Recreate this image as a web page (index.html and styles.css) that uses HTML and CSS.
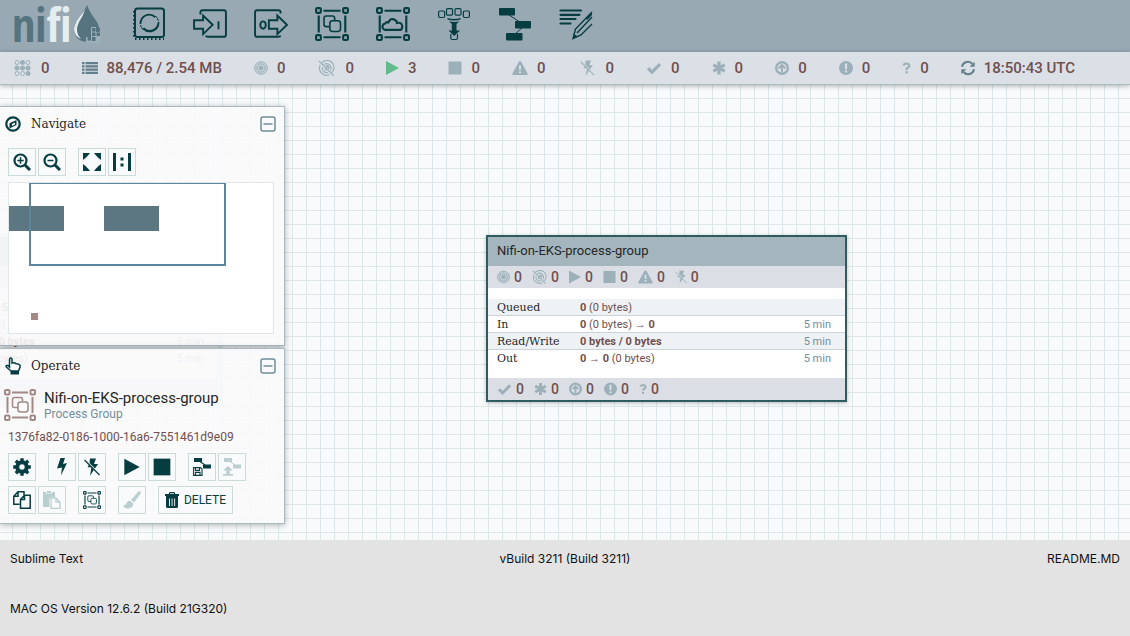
FILE: index.html
```html
<!DOCTYPE html>
<html lang="en">
<head>
<meta charset="utf-8">
<title>NiFi Flow</title>
<link rel="stylesheet" href="styles.css">
</head>
<body>
<svg class="sprite" aria-hidden="true">
  <symbol id="i-threads" viewBox="0 0 16 16"><g fill="none" stroke="currentColor"><circle cx="2.500" cy="2.500" r="2"/><circle cx="13.500" cy="2.500" r="2"/><circle cx="2.500" cy="13.500" r="2"/></g><g fill="currentColor"><circle cx="8" cy="2.500" r="2.500"/><circle cx="2.500" cy="8" r="2.500"/><circle cx="8" cy="8" r="2.500"/><circle cx="13.500" cy="8" r="2.500"/><circle cx="13.500" cy="13.500" r="2.500"/></g><circle cx="8" cy="13.500" r="2" fill="none" stroke="currentColor"/></symbol>
  <symbol id="i-list" viewBox="0 0 16 12"><path fill="currentColor" d="M0 0h2.500v2.300H0zM3.500 0H16v2.300H3.500zM0 3.200h2.500v2.300H0zM3.500 3.200H16v2.300H3.500zM0 6.500h2.500v2.300H0zM3.500 6.500H16v2.300H3.500zM0 9.700h2.500V12H0zM3.500 9.700H16V12H3.500z"/></symbol>
  <symbol id="i-transmit" viewBox="0 0 14 14"><circle cx="7" cy="7" r="6.500" fill="currentColor" opacity=".3"/><g fill="none" stroke="currentColor"><circle cx="7" cy="7" r="6.300"/><circle cx="7" cy="7" r="4.200"/></g><circle cx="7" cy="7" r="2.300" fill="currentColor"/></symbol>
  <symbol id="i-notransmit" viewBox="0 0 16 16"><g fill="none" stroke="currentColor" stroke-width="1.200"><path d="M3.500 2.500A7 7 0 0 1 13.500 12.500M5.500 4.400A4.600 4.600 0 0 1 12 10.500M1.800 5A7 7 0 0 0 11 14.500M4 7a4.500 4.500 0 0 0 5.500 5.500M.5 1L15 15.500"/></g><path fill="currentColor" d="M7 6a2.400 2.400 0 0 1 3.500 3.300zM6 7.500l3 3a2.400 2.400 0 0 1-3-3z"/></symbol>
  <symbol id="i-play" viewBox="0 0 12 14"><path fill="currentColor" d="M0 .5L12 7 0 13.500z"/></symbol>
  <symbol id="i-stop" viewBox="0 0 14 14"><path fill="currentColor" d="M.5.500h13v13H.5z"/></symbol>
  <symbol id="i-warn" viewBox="0 0 16 14"><path fill="currentColor" fill-rule="evenodd" d="M8 0q.8 0 1.200.7l6.500 12q.4 1.300-1 1.300H1.300q-1.400 0-1-1.300l6.500-12Q7.200 0 8 0zM6.900 4.500l.3 4.500h1.600l.3-4.500zM7 10.200v1.900h2v-1.900z"/></symbol>
  <symbol id="i-disabled" viewBox="0 0 16 18"><path fill="currentColor" d="M6 .5h6L10 6h4L11 10.500 5.500 5zM7.500 9l2.500 2.500L6 18zM5 6.800L7.500 9.300H3.500z"/><path stroke="currentColor" stroke-width="1.300" d="M.5 2l15 15"/></symbol>
  <symbol id="i-check" viewBox="0 0 16 14"><path d="M2 7.200l4 4L14 3" fill="none" stroke="currentColor" stroke-width="3.200"/></symbol>
  <symbol id="i-asterisk" viewBox="0 0 14 14"><path d="M7 .5v13M1.300 3.800l11.400 6.400M12.700 3.800L1.300 10.200" stroke="currentColor" stroke-width="3.200"/></symbol>
  <symbol id="i-up" viewBox="0 0 14 14"><circle cx="7" cy="7" r="5.800" fill="none" stroke="currentColor" stroke-width="2.400"/><path d="M7 11.500V4M3.800 7.200L7 4l3.200 3.200" fill="none" stroke="currentColor" stroke-width="2"/></symbol>
  <symbol id="i-bang" viewBox="0 0 14 14"><path fill="currentColor" fill-rule="evenodd" d="M7 0a7 7 0 1 1 0 14A7 7 0 0 1 7 0zM5.800 2.500l.3 6h1.800l.3-6zM5.900 9.600v2h2.200v-2z"/></symbol>
  <symbol id="i-question" viewBox="0 0 9 14"><path d="M1.500 4.500Q2 2.500 4.500 2.500 7.500 2.700 7.300 5 7 6.300 5.500 7 4.500 7.600 4.500 9" fill="none" stroke="currentColor" stroke-width="2.200"/><path fill="currentColor" d="M3.400 10.200h2.300v2.300H3.400z"/></symbol>
  <symbol id="i-refresh" viewBox="0 0 14 14"><path d="M1 5.800A6 6 0 0 1 11.500 3M13 8.200A6 6 0 0 1 2.500 11" fill="none" stroke="currentColor" stroke-width="2"/><path fill="currentColor" d="M13.700.8v5h-5zM.3 13.200v-5h5z"/></symbol>
  <symbol id="i-processor" viewBox="0 0 32 34"><rect x="2" y="1.500" width="29" height="28.500" rx="2.500" fill="none" stroke="currentColor" stroke-width="2"/><path d="M1 4v27M2 32h29" fill="none" stroke="currentColor" stroke-width="2" stroke-dasharray="1.500 2.500"/><path fill="currentColor" d="M6.600 17A9.700 9.700 0 0 1 23 9.500l-1.500 1.200Q18 7.500 13.500 9 8.500 11 8.300 17zM26.400 15A9.700 9.700 0 0 1 9.500 22l1.600-1.500q3.900 4 8.900 1.800Q24.500 20 24.800 15z"/><path d="M7.500 18a9 9 0 0 0 3 5M25.500 14a9 9 0 0 0-3-5" fill="none" stroke="currentColor"/></symbol>
  <symbol id="i-input" viewBox="0 0 32 32"><g fill="none" stroke="currentColor" stroke-width="1.800"><path d="M7 7V5q0-2 2-2h20q2 0 2 2v21q0 2-2 2H14q-1.500 0-2-1"/><path d="M1 12.500h8.500V8l9 8.800-9 8.700v-5H1zM24 13.500v7.500"/></g></symbol>
  <symbol id="i-output" viewBox="0 0 32 32"><g fill="none" stroke="currentColor" stroke-width="1.800"><path d="M25 6V5q0-2-2-2H3Q1 3 1 5v21q0 2 2 2h20q1.500 0 2-1"/><path d="M14 12.500h8V8l9 8.800-9 8.700v-5h-8z"/><ellipse cx="8.500" cy="17" rx="2.600" ry="3.500"/></g></symbol>
  <symbol id="i-group" viewBox="0 0 32 32"><g fill="none" stroke="currentColor" stroke-width="2"><rect x="1" y="1" width="4.500" height="4.500" rx="1"/><rect x="26.500" y="1" width="4.500" height="4.500" rx="1"/><rect x="1" y="26.500" width="4.500" height="4.500" rx="1"/><rect x="26.500" y="26.500" width="4.500" height="4.500" rx="1"/><path d="M8 3.500h16M8 28.500h16M3.500 8v16M28.500 8v16"/></g><g fill="none" stroke="currentColor" stroke-width="1.500"><path d="M14 18.500h-3.500q-2 0-2-2v-6q0-2 2-2h6q2 0 2 2v2"/><rect x="14" y="13" width="10" height="10" rx="2.500"/></g></symbol>
  <symbol id="i-remote" viewBox="0 0 32 32"><g fill="none" stroke="currentColor" stroke-width="2"><rect x="1" y="1" width="4.500" height="4.500" rx="1"/><rect x="26.500" y="1" width="4.500" height="4.500" rx="1"/><rect x="1" y="26.500" width="4.500" height="4.500" rx="1"/><rect x="26.500" y="26.500" width="4.500" height="4.500" rx="1"/><path d="M8 3.500h16M8 28.500h16M3.500 8v16M28.500 8v16M9.500 21.500a3 3 0 0 1-.8-6q1-1.800 3-1 2-4.500 6-2.500 2 1 2 3 4.300-1 5 3 0 3.500-2 3.500z"/></g></symbol>
  <symbol id="i-funnel" viewBox="0 0 32 34"><g fill="none" stroke="currentColor" stroke-width="1.200"><rect x=".6" y="4" width="6" height="6.500" rx="1.200"/><rect x="8.500" y="1.600" width="6" height="6.500" rx="1.200"/><rect x="17" y="1.600" width="6" height="6.500" rx="1.200"/><rect x="25.400" y="4" width="6" height="6.500" rx="1.200"/><path d="M12.800 27v4q0 1.500 1.500 1.500H18q1.500 0 1.500-1.500v-4"/></g><path fill="currentColor" d="M9.500 11q6.500 2 13 0v1.500q-6.500 2-13 0zM11 14.200q5.500 1.500 10.500 0L18.500 17v6.500H22L16.200 29l-5.700-5.500h3.300V17z"/></symbol>
  <symbol id="i-template" viewBox="0 0 32 34"><g fill="currentColor"><rect x="0" y="1" width="16" height="7.500" rx="1"/><rect x="16" y="14" width="16" height="7.500" rx="1"/><rect x="7" y="26" width="16.500" height="7.500" rx="1"/></g><path d="M10 8l10 6.500M23 21l-7 6" stroke="currentColor" fill="none"/></symbol>
  <symbol id="i-label" viewBox="0 0 34 34"><g fill="none" stroke="currentColor" stroke-width="2.200" stroke-linecap="round"><path d="M1.500 3.500H22M1.500 7.800h19M1.500 12h15M1.500 16.500h10"/></g><g fill="none" stroke="currentColor" stroke-width="1.400"><path d="M33 5L16.500 22 14 31.500 22 28 33 17M33 10L18 26"/></g><path fill="currentColor" d="M14.800 27l4 2.500-5 2.500zM27 11l6-5v2l-5 5z"/></symbol>
  <symbol id="i-compass" viewBox="0 0 16 16"><circle cx="8" cy="8" r="6.700" fill="none" stroke="currentColor" stroke-width="2.200"/><path fill="currentColor" fill-rule="evenodd" d="M11.500 4v5l-7 3.500V7.200zM7 8v2l3-1.500V6.500z"/></symbol>
  <symbol id="i-hand" viewBox="0 0 16 18"><path d="M4.500 10V2.500q0-1.500 1.300-1.500T7 2.500V6q3-.5 4 .8 3-.3 4 1.500v2L13.500 14H6.200L3 11.500 1 9.500q0-1.500 1.800-1z" fill="none" stroke="currentColor" stroke-width="1.500"/><path fill="currentColor" d="M5.500 14H14v3.500H5.500z"/></symbol>
  <symbol id="i-zoomin" viewBox="0 0 18 18"><circle cx="7.500" cy="7.500" r="6" fill="none" stroke="currentColor" stroke-width="2.200"/><path d="M12 12l5 5" stroke="currentColor" stroke-width="3"/><path d="M4.300 7.500h6.400M7.500 4.300v6.400" stroke="currentColor" stroke-width="1.500"/></symbol>
  <symbol id="i-zoomout" viewBox="0 0 18 18"><circle cx="7.500" cy="7.500" r="6" fill="none" stroke="currentColor" stroke-width="2.200"/><path d="M12 12l5 5" stroke="currentColor" stroke-width="3"/><path d="M4.500 7.500h6" stroke="currentColor" stroke-width="1.500"/></symbol>
  <symbol id="i-fit" viewBox="0 0 18 18"><path fill="currentColor" d="M0 0h7L5 2.500 2.500 5 0 7zM18 0v7l-2.500-2L13 2.500 11 0zM0 18v-7l2.500 2L5 15.500 7 18zM18 18h-7l2-2.500 2.500-2.500 2.500-2z"/></symbol>
  <symbol id="i-actual" viewBox="0 0 18 18"><path fill="currentColor" d="M0 0h3v18H0zM15 0h3v18h-3zM7.500 4.500h3v3h-3zM7.500 10.500h3v3h-3z"/></symbol>
  <symbol id="i-minus" viewBox="0 0 16 16"><rect x="1" y="1" width="14" height="14" rx="2" fill="none" stroke="currentColor" stroke-width="1.500"/><path d="M3.500 8h9" stroke="currentColor" stroke-width="1.500"/></symbol>
  <symbol id="i-gear" viewBox="0 0 16 16"><circle cx="8" cy="8" r="4.200" fill="none" stroke="currentColor" stroke-width="3.600"/><g stroke="currentColor" stroke-width="3"><path d="M8 .2v3M8 12.800v3M.2 8h3M12.800 8h3M2.500 2.500l2 2M11.500 11.500l2 2M13.500 2.500l-2 2M4.500 11.500l-2 2"/></g></symbol>
  <symbol id="i-bolt" viewBox="0 0 12 18"><path fill="currentColor" d="M4.500 0H9L7 6l4-1L5 17.500 6 9.500l-5 1z"/></symbol>
  <symbol id="i-save" viewBox="0 0 18 18"><path fill="currentColor" d="M1 0h8v4H1zM10 6.500h8v4h-8z"/><path d="M7 3.500L12 7M.6 9.600h6.800L9 11v6.400H.6zM2.500 9.600v2.800h4V9.600M2.500 17.400v-3h4.500v3" fill="none" stroke="currentColor" stroke-width="1.100"/></symbol>
  <symbol id="i-upload" viewBox="0 0 18 18"><path fill="currentColor" d="M1 0h8v4H1zM10 6.500h8v4h-8zM5 8l5 4.500H6.700V16H10v1.700H0V16h3.300v-3.500H0z"/><path d="M7 3.500L12 7" stroke="currentColor"/></symbol>
  <symbol id="i-copy" viewBox="0 0 18 18"><path d="M6.500 13.200H.8V5.200L5 .8h6V4M5 .8v4.400H.8M7.500 8.500L11.500 4.200h5.700v13H7.500zM11.500 4.200v4.300h-4" fill="none" stroke="currentColor" stroke-width="1.500"/></symbol>
  <symbol id="i-paste" viewBox="0 0 18 18"><path fill="currentColor" d="M0 1h3v1.500h6V1h3v5H8L6.500 8v8H0zM4 0h4v2H4z"/><path d="M8 7h5l4 4v6.300H8zM13 7v4h4" fill="none" stroke="currentColor" stroke-width="1.300"/></symbol>
  <symbol id="i-brush" viewBox="0 0 18 18"><path fill="currentColor" d="M17.500.5q1 1-.5 3l-6 8-3-2.500 7-8q1.500-1.300 2.500-.5zM7 9.800l3.300 2.700Q10 17 5 17.500q-4 .3-5-3.500 2 .7 3-1 1-3 4-3.200z"/></symbol>
  <symbol id="i-trash" viewBox="0 0 14 16"><path fill="currentColor" fill-rule="evenodd" d="M4.500 0h5l.8 2H14v2H0V2h3.700zM5.200 1.200L5 2h4l-.2-.8zM1 4h12v10.500q0 1.500-1.500 1.500h-9Q1 16 1 14.500zM4 6.500v7.500h.9V6.500zM6.600 6.500v7.500h.9V6.500zM9.200 6.500v7.500h.9V6.500z"/></symbol>
</svg>

<header class="toolbar">
  <div class="logo"><span class="logo-ni">ni</span><span class="logo-fi">fi</span>
    <svg class="drop" viewBox="0 0 28 38"><path fill="#557480" d="M14 0Q16 6 22 14q5 7 4 12-2 11-12 11Q2 36 1 25 1 18 8 10 12 5 14 0z"/><path fill="#e4edf0" d="M12 5Q10 11 6 17q-5 10 2 17-7-3-7-10 1-7 7-14z"/><path fill="#9cb0b9" d="M18 22h5v5h5v11H13v-6h5z"/><path fill="#557480" d="M19 23h3.500v3.500H19zM23.500 23H27v3.500h-3.500zM14.500 27.500H18V31h-3.500zM19 27.500h3.500V31H19zM23.500 27.500H27V31h-3.500zM14.500 32H18v3.500h-3.500zM19 32h3.500v4H19z"/></svg>
  </div>
  <nav class="components" aria-label="Components">
    <button aria-label="Processor"><svg><use href="#i-processor"/></svg></button>
    <button aria-label="Input port"><svg><use href="#i-input"/></svg></button>
    <button aria-label="Output port"><svg><use href="#i-output"/></svg></button>
    <button aria-label="Process group"><svg><use href="#i-group"/></svg></button>
    <button aria-label="Remote process group"><svg><use href="#i-remote"/></svg></button>
    <button aria-label="Funnel"><svg><use href="#i-funnel"/></svg></button>
    <button aria-label="Template"><svg><use href="#i-template"/></svg></button>
    <button aria-label="Label"><svg><use href="#i-label"/></svg></button>
  </nav>
</header>

<div class="status">
  <span class="stat"><svg class="w19"><use href="#i-threads"/></svg>0</span>
  <span class="stat"><svg class="w16 dark"><use href="#i-list"/></svg>88,476 / 2.54 MB</span>
  <span class="stat"><svg class="w14"><use href="#i-transmit"/></svg>0</span>
  <span class="stat"><svg class="w19"><use href="#i-notransmit"/></svg>0</span>
  <span class="stat"><svg class="w13 running"><use href="#i-play"/></svg>3</span>
  <span class="stat"><svg class="w14"><use href="#i-stop"/></svg>0</span>
  <span class="stat"><svg class="w16"><use href="#i-warn"/></svg>0</span>
  <span class="stat"><svg class="w19"><use href="#i-disabled"/></svg>0</span>
  <span class="stat"><svg class="w16"><use href="#i-check"/></svg>0</span>
  <span class="stat"><svg class="w14"><use href="#i-asterisk"/></svg>0</span>
  <span class="stat"><svg class="w14"><use href="#i-up"/></svg>0</span>
  <span class="stat"><svg class="w14"><use href="#i-bang"/></svg>0</span>
  <span class="stat"><svg class="w9"><use href="#i-question"/></svg>0</span>
  <span class="stat"><svg class="w14 dark"><use href="#i-refresh"/></svg>18:50:43 UTC</span>
</div>

<main class="canvas">
  <section class="node node-behind" aria-hidden="true">
    <h2 class="node-title"></h2>
    <div class="node-stats"></div>
    <div class="node-body">
      <div class="row"><span></span><span>88,476 (1.5</span><span></span></div>
      <div class="row"><span></span><span><b>0</b> (0 bytes)</span><span></span></div>
      <div class="row"><span></span><span><b>0 bytes / 0 bytes</b></span><span class="when">5 min</span></div>
      <div class="row"><span></span><span><b>0</b> → <b>0</b> (0 bytes)</span><span class="when">5 min</span></div>
    </div>
    <div class="node-stats"></div>
  </section>

  <section class="node node-main">
    <h2 class="node-title">Nifi-on-EKS-process-group</h2>
    <div class="node-stats">
      <span><svg class="w13"><use href="#i-transmit"/></svg>0</span>
      <span><svg><use href="#i-notransmit"/></svg>0</span>
      <span><svg class="w12"><use href="#i-play"/></svg>0</span>
      <span><svg class="w13"><use href="#i-stop"/></svg>0</span>
      <span><svg><use href="#i-warn"/></svg>0</span>
      <span><svg class="w12"><use href="#i-disabled"/></svg>0</span>
    </div>
    <div class="node-body">
      <div class="row"><span class="name">Queued</span><span><b>0</b> (0 bytes)</span><span></span></div>
      <div class="row"><span class="name">In</span><span><b>0</b> (0 bytes) → <b>0</b></span><span class="when">5 min</span></div>
      <div class="row"><span class="name">Read/Write</span><span><b>0 bytes / 0 bytes</b></span><span class="when">5 min</span></div>
      <div class="row"><span class="name">Out</span><span><b>0</b> → <b>0</b> (0 bytes)</span><span class="when">5 min</span></div>
    </div>
    <div class="node-stats">
      <span><svg><use href="#i-check"/></svg>0</span>
      <span><svg class="w13"><use href="#i-asterisk"/></svg>0</span>
      <span><svg class="w13"><use href="#i-up"/></svg>0</span>
      <span><svg class="w13"><use href="#i-bang"/></svg>0</span>
      <span><svg class="w9"><use href="#i-question"/></svg>0</span>
    </div>
  </section>

  <aside class="palettes">
    <section class="palette">
      <div class="palette-head"><svg><use href="#i-compass"/></svg><h2>Navigate</h2><button aria-label="Collapse Navigate"><svg><use href="#i-minus"/></svg></button></div>
      <div class="tools">
        <div class="set"><button aria-label="Zoom in"><svg><use href="#i-zoomin"/></svg></button><button aria-label="Zoom out"><svg><use href="#i-zoomout"/></svg></button></div>
        <div class="set"><button aria-label="Fit"><svg><use href="#i-fit"/></svg></button><button aria-label="Actual size"><svg><use href="#i-actual"/></svg></button></div>
      </div>
      <svg class="birdseye" viewBox="0 0 264 150" aria-label="Birdseye view">
        <path fill="#5c7781" d="M0 23h55v25H0zM95 23h55v25H95z"/>
        <path fill="#a28985" d="M22 130h7v7h-7z"/>
        <rect x="21" y="0" width="195" height="82" fill="none" stroke="#5a86a1" stroke-width="2"/>
      </svg>
    </section>

    <section class="palette operate">
      <div class="palette-head"><svg><use href="#i-hand"/></svg><h2>Operate</h2><button aria-label="Collapse Operate"><svg><use href="#i-minus"/></svg></button></div>
      <div class="context">
        <svg><use href="#i-group"/></svg>
        <div><div class="context-name">Nifi-on-EKS-process-group</div><div class="context-type">Process Group</div></div>
      </div>
      <div class="context-id">1376fa82-0186-1000-16a6-7551461d9e09</div>
      <div class="tools">
        <div class="set"><button aria-label="Configuration"><svg><use href="#i-gear"/></svg></button></div>
        <div class="set"><button aria-label="Enable"><svg><use href="#i-bolt"/></svg></button><button aria-label="Disable"><svg><use href="#i-disabled"/></svg></button></div>
        <div class="set"><button aria-label="Start"><svg><use href="#i-play"/></svg></button><button aria-label="Stop"><svg><use href="#i-stop"/></svg></button></div>
        <div class="set"><button aria-label="Create template"><svg><use href="#i-save"/></svg></button><button aria-label="Upload template" disabled><svg><use href="#i-upload"/></svg></button></div>
      </div>
      <div class="tools">
        <div class="set"><button aria-label="Copy"><svg><use href="#i-copy"/></svg></button><button aria-label="Paste" disabled><svg><use href="#i-paste"/></svg></button></div>
        <div class="set"><button aria-label="Group"><svg><use href="#i-group"/></svg></button></div>
        <div class="set"><button aria-label="Change color" disabled><svg><use href="#i-brush"/></svg></button></div>
        <div class="set"><button class="delete"><svg><use href="#i-trash"/></svg>DELETE</button></div>
      </div>
    </section>
  </aside>
</main>

<footer class="sysinfo">
  <span>Sublime Text</span>
  <span class="center">vBuild 3211 (Build 3211)</span>
  <span class="right">README.MD</span>
  <span class="wide">MAC OS Version 12.6.2 (Build 21G320)</span>
</footer>
</body>
</html>
```

FILE: styles.css
```css
* { box-sizing: border-box; }
body {
  margin: 0;
  min-height: 100vh;
  display: flex;
  flex-direction: column;
  font-family: Roboto, "Liberation Sans", sans-serif;
  color: #262626;
}
button { margin: 0; padding: 0; border: 0; background: none; color: inherit; font: inherit; }
h2 { margin: 0; font-weight: 400; }
svg { display: block; flex: none; }
.sprite { position: absolute; width: 0; height: 0; }

.toolbar {
  display: flex;
  align-items: center;
  height: 52px;
  padding: 0 0 4px 12px;
  background: #98a9b4;
  color: #063d40;
}
.logo {
  display: flex;
  align-items: center;
  width: 120px;
  font: bold 46px/48px "Liberation Sans Narrow", "Open Sans Condensed", Roboto, sans-serif;
}
.logo-ni { color: #557480; }
.logo-fi { color: #e4edf0; }
.drop { width: 28px; height: 38px; margin-left: 2px; }
.components { display: flex; gap: 27px; }
.components button { width: 34px; height: 34px; }
.components svg { width: 34px; height: 34px; }

.status {
  display: flex;
  align-items: center;
  gap: 32px;
  height: 33px;
  padding-left: 13px;
  background: #dbe0e6;
  border-bottom: 1px solid #aabbc3;
  box-shadow: 0 1px 5px rgba(0, 0, 0, 0.3);
  position: relative;
  z-index: 1;
}
.stat {
  display: flex;
  align-items: center;
  gap: 9px;
  font-size: 15px;
  font-weight: 500;
  line-height: 20px;
  color: #714f4e;
  white-space: nowrap;
}
.stat svg { height: 16px; color: #9bb0b9; }
.stat .dark { color: #637f8c; }
.stat .running { color: #62bb8b; }
.w19 { width: 19px; }
.w16 { width: 16px; }
.w14 { width: 14px; }
.w13 { width: 13px; }
.w9 { width: 9px; }

.canvas {
  flex: 1;
  position: relative;
  overflow: hidden;
  min-height: 452px;
  background-color: #f8fafb;
  background-image:
    linear-gradient(to right, #dce7e8 1px, transparent 1px),
    linear-gradient(to bottom, #dce7e8 1px, transparent 1px);
  background-size: 14px 14px;
  background-position: 12px 13px;
}

.node {
  position: absolute;
  top: 150px;
  width: 361px;
  border: 2px solid #2f5c60;
  background: #fff;
  box-shadow: 0 1px 4px rgba(0, 0, 0, 0.25);
}
.node-main { left: 486px; }
.node-behind { left: -141px; border-color: #dce4e6; }
.node-title {
  height: 29px;
  padding: 0 9px;
  background: #a5b5bd;
  font-size: 13px;
  line-height: 28px;
}
.node-stats {
  display: flex;
  align-items: center;
  gap: 10px;
  height: 22px;
  padding: 0 9px;
  background: #dbdfe5;
  font-size: 14px;
  font-weight: 500;
  color: #714f4e;
}
.node-stats span { display: flex; align-items: center; gap: 4px; }
.node-stats svg { width: 15px; height: 14px; color: #9bb0b9; }
.node-stats .w13 { width: 13px; }
.node-stats .w12 { width: 12px; }
.node-stats .w9 { width: 8px; }
.node-body { padding: 11px 0; }
.row {
  display: grid;
  grid-template-columns: 83px 1fr auto;
  height: 17px;
  padding: 0 14px 0 9px;
  border-bottom: 1px solid #c9d3d8;
  font-size: 11px;
  line-height: 17px;
  color: #714f4e;
  white-space: nowrap;
}
.row:nth-child(odd) { background: #eff2f5; }
.row:last-child { border-bottom-color: transparent; }
.name { font-family: "DejaVu Serif", serif; color: #262626; }
.when { color: #728e9b; }

.palettes {
  position: absolute;
  top: 21px;
  left: 0;
  width: 285px;
  display: grid;
  gap: 2px;
}
.palette {
  padding: 0 8px 11px;
  border: 1px solid #a9bac2;
  border-left: 0;
  background: rgba(249, 250, 251, 0.9);
  box-shadow: 0 1px 6px rgba(0, 0, 0, 0.3);
  color: #063d40;
}
.operate { padding-bottom: 9px; }
.palette-head {
  display: grid;
  grid-template-columns: 16px 1fr 16px;
  align-items: center;
  gap: 10px;
  height: 33px;
  margin-left: -3px;
}
.palette-head svg { width: 16px; height: 18px; }
.palette-head h2 {
  font: 12px/18px "DejaVu Serif", serif;
  color: #262626;
}
.palette-head button { color: #728e9b; }
.tools { display: flex; gap: 12px; margin-top: 8px; }
.tools + .tools { margin-top: 5px; }
.set { display: flex; gap: 2px; }
.set button {
  display: flex;
  align-items: center;
  justify-content: center;
  width: 28px;
  height: 28px;
  border: 1px solid #cbdbda;
  background: rgba(249, 250, 251, 0.8);
}
.set svg { width: 18px; height: 18px; }
.set button:disabled { color: #bccfd0; }
.set .delete { width: 75px; gap: 5px; font-size: 12px; }
.set .delete svg { width: 14px; height: 16px; }
.birdseye {
  width: 266px;
  height: 152px;
  margin-top: 6px;
  border: 1px solid #e0e7e9;
  background: #fff;
}
.context { display: flex; gap: 8px; margin: 7px 0 0 -4px; }
.context > svg { width: 32px; height: 32px; color: #a28985; }
.context-name { font-size: 15px; line-height: 18px; color: #262626; }
.context-type { font-size: 12px; line-height: 14px; color: #728e9b; }
.context-id { margin-top: 8px; font-size: 12px; line-height: 16px; color: #714f4e; }

.sysinfo {
  display: grid;
  grid-template-columns: 1fr auto 1fr;
  row-gap: 32px;
  padding: 10px 10px 18px;
  background: #e3e3e3;
  font: 12px/18px Inter, "Liberation Sans", sans-serif;
  color: #111;
}
.right { text-align: right; }
.wide { grid-column: 1 / -1; }
```
